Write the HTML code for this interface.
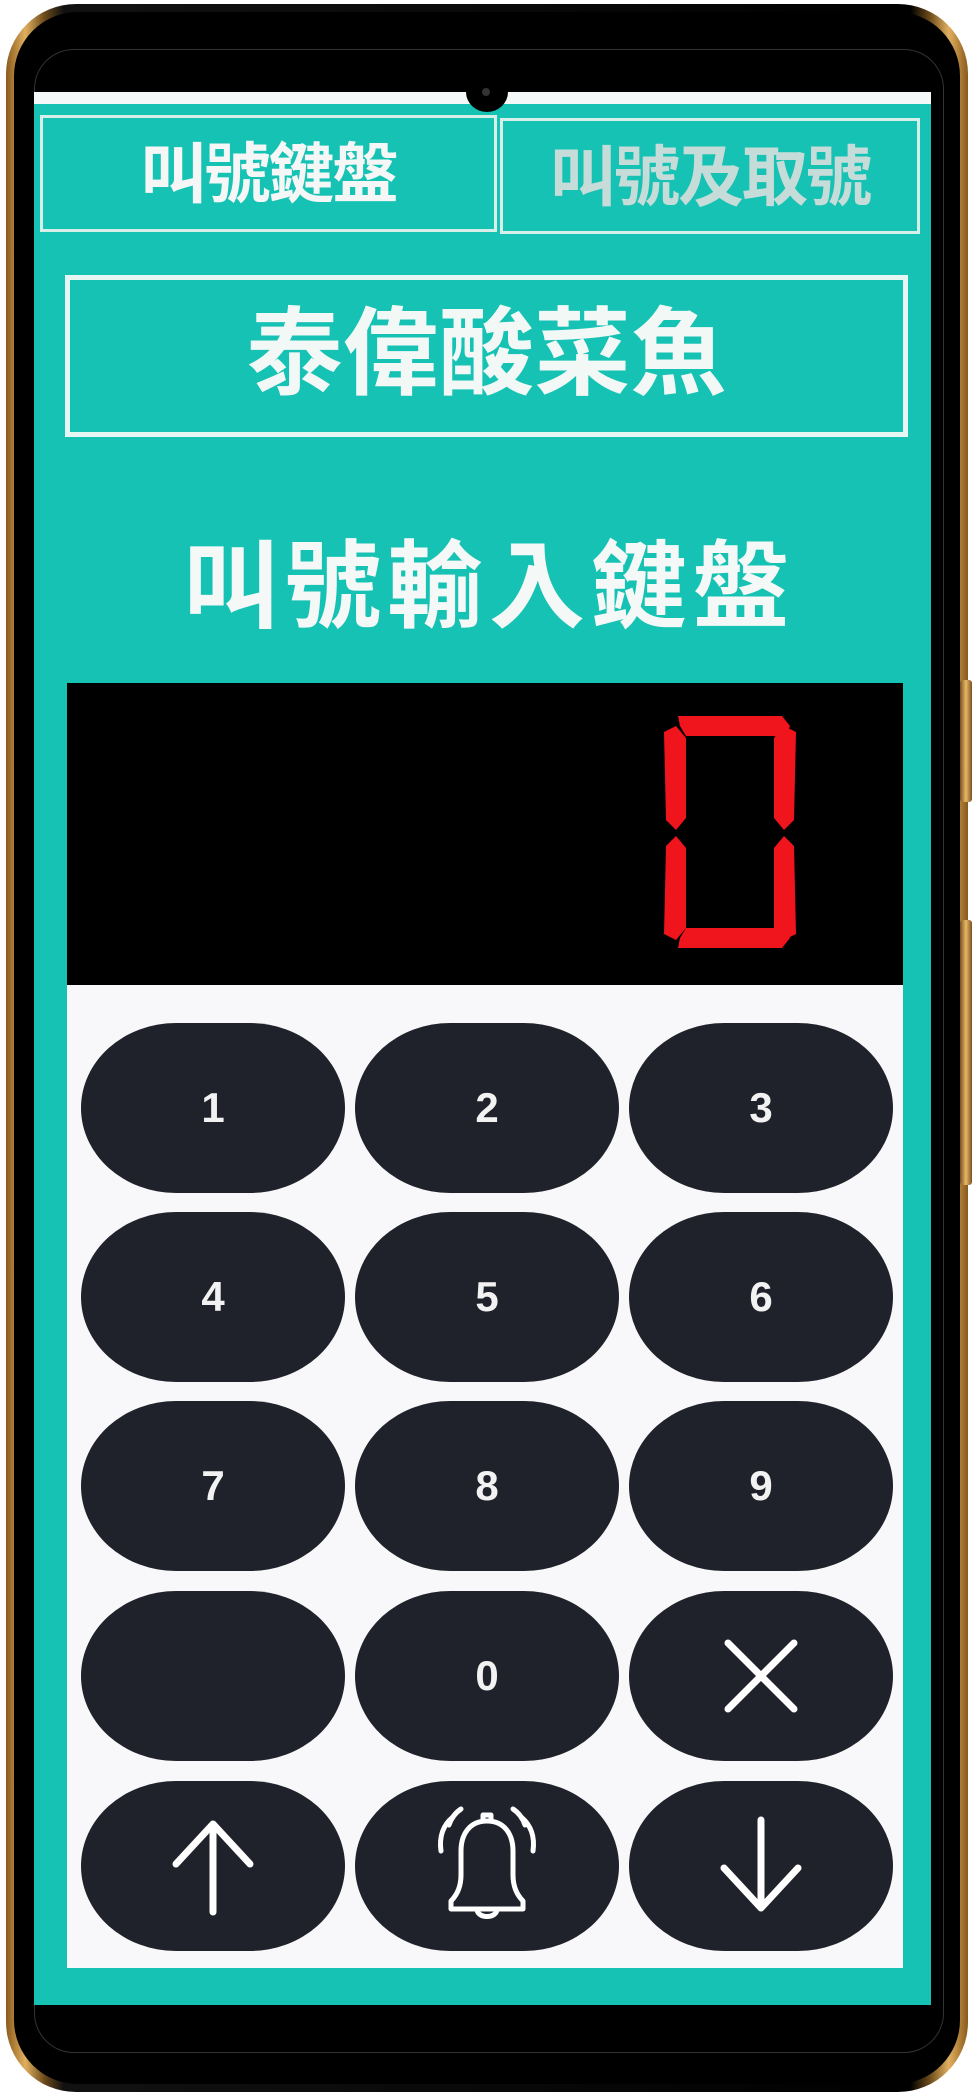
<!DOCTYPE html>
<html><head><meta charset="utf-8"><style>
*{margin:0;padding:0;box-sizing:border-box}
body{width:978px;height:2100px;background:#fff;position:relative;overflow:hidden;font-family:"Liberation Sans","Noto Sans CJK TC",sans-serif}
.abs{position:absolute}
.frame{left:6px;top:4px;width:962px;height:2088px;border-radius:70px;background:linear-gradient(90deg,#8a5a1c,#e0b060 2%,#6b4a1a 4%,#111 6%,#000 94%,#6b4a1a 96%,#e0b060 98%,#8a5a1c);}
.bez{left:14px;top:12px;width:946px;height:2072px;border-radius:64px;background:#000}
.scr{left:34px;top:49px;width:910px;height:2004px;border-radius:40px;border:1px solid #333;background:#000}
.teal{left:34px;top:92px;width:897px;height:1913px;background:#16c2b3;border-top:12px solid #f4f8f8}
.tab{border:3px solid #d6efe9;font-size:66px;font-weight:bold;color:#f4f7f6;text-align:center;line-height:112px;letter-spacing:-2px}
.btn{position:absolute;width:264px;height:170px;border-radius:95px/85px;background:#1f222a;color:#f2f2f2;font:bold 42px "Liberation Sans",sans-serif;display:flex;align-items:center;justify-content:center}
</style></head><body>
<div class="abs frame"></div>
<div class="abs bez"></div>
<div class="abs scr"></div>
<div class="abs" style="left:960px;top:680px;width:12px;height:122px;background:linear-gradient(90deg,#7a5020,#e8b868,#7a5020);border-radius:3px"></div>
<div class="abs" style="left:960px;top:920px;width:12px;height:265px;background:linear-gradient(90deg,#7a5020,#e8b868,#7a5020);border-radius:3px"></div>
<div class="abs teal"></div>
<div class="abs" style="left:466px;top:72px;width:42px;height:40px;border-radius:50%;background:#000"></div>
<div class="abs" style="left:482px;top:88px;width:8px;height:8px;border-radius:50%;background:#333"></div>
<div class="abs tab" style="left:40px;top:115px;width:457px;height:117px">叫號鍵盤</div>
<div class="abs tab" style="left:500px;top:118px;width:420px;height:116px;color:#c6dcd8">叫號及取號</div>
<div class="abs" style="left:65px;top:275px;width:843px;height:162px;border:5px solid #e6f7f3;color:#f2f8f6;font-size:96px;font-weight:bold;text-align:center;line-height:150px">泰偉酸菜魚</div>
<div class="abs" style="left:66px;top:538px;width:846px;text-align:center;color:#f4f8f7;font-size:96px;font-weight:bold;letter-spacing:6px;line-height:100px">叫號輸入鍵盤</div>
<div class="abs" style="left:67px;top:683px;width:836px;height:302px;background:#000"></div>
<svg class="abs" style="left:660px;top:712px" width="140" height="240" viewBox="0 0 140 240">
<g fill="#f0141c">
<polygon points="18,4 122,4 130,14 126,24 26,24 20,14"/>
<polygon points="4,20 16,14 26,26 26,106 16,118 6,108"/>
<polygon points="136,20 124,14 114,26 114,106 124,118 134,108"/>
<polygon points="4,222 16,228 26,216 26,136 16,124 6,134"/>
<polygon points="136,222 124,228 114,216 114,136 124,124 134,134"/>
<polygon points="18,236 122,236 130,226 126,216 26,216 20,226"/>
</g></svg>
<div class="abs" style="left:67px;top:985px;width:836px;height:983px;background:#f8f8fa"></div>
<div class="btn" style="left:81px;top:1023px">1</div>
<div class="btn" style="left:355px;top:1023px">2</div>
<div class="btn" style="left:629px;top:1023px">3</div>
<div class="btn" style="left:81px;top:1212px">4</div>
<div class="btn" style="left:355px;top:1212px">5</div>
<div class="btn" style="left:629px;top:1212px">6</div>
<div class="btn" style="left:81px;top:1401px">7</div>
<div class="btn" style="left:355px;top:1401px">8</div>
<div class="btn" style="left:629px;top:1401px">9</div>
<div class="btn" style="left:81px;top:1591px"></div>
<div class="btn" style="left:355px;top:1591px">0</div>
<div class="btn" style="left:629px;top:1591px"><svg width="80" height="80" viewBox="0 0 80 80"><path d="M7 7L73 73M73 7L7 73" stroke="#fff" stroke-width="7" stroke-linecap="round"/></svg></div>
<div class="btn" style="left:81px;top:1781px"><svg width="90" height="100" viewBox="0 0 90 100"><path d="M45 96V8M8 48L45 8L82 48" stroke="#fff" stroke-width="7" fill="none" stroke-linecap="round" stroke-linejoin="round"/></svg></div>
<div class="btn" style="left:355px;top:1781px"><svg width="120" height="140" viewBox="0 0 120 130"><g stroke="#fff" stroke-width="5" fill="none" stroke-linecap="round" stroke-linejoin="round">
<path d="M60 20c-18 0-26 14-26 30v24c0 12-4 20-10 26v8h72v-8c-6-6-10-14-10-26V50c0-16-8-30-26-30z"/>
<path d="M56 20v-6h8v6"/><path d="M50 108c0 10 20 10 20 0"/>
<path d="M26 16C16 24 12 36 14 50"/><path d="M94 16c10 8 14 20 12 34"/>
<path d="M34 8C28 12 24 18 22 24"/><path d="M86 8c6 4 10 10 12 16"/></g></svg></div>
<div class="btn" style="left:629px;top:1781px"><svg width="90" height="100" viewBox="0 0 90 100"><path d="M45 4V92M8 52L45 92L82 52" stroke="#fff" stroke-width="7" fill="none" stroke-linecap="round" stroke-linejoin="round"/></svg></div>
</body></html>
